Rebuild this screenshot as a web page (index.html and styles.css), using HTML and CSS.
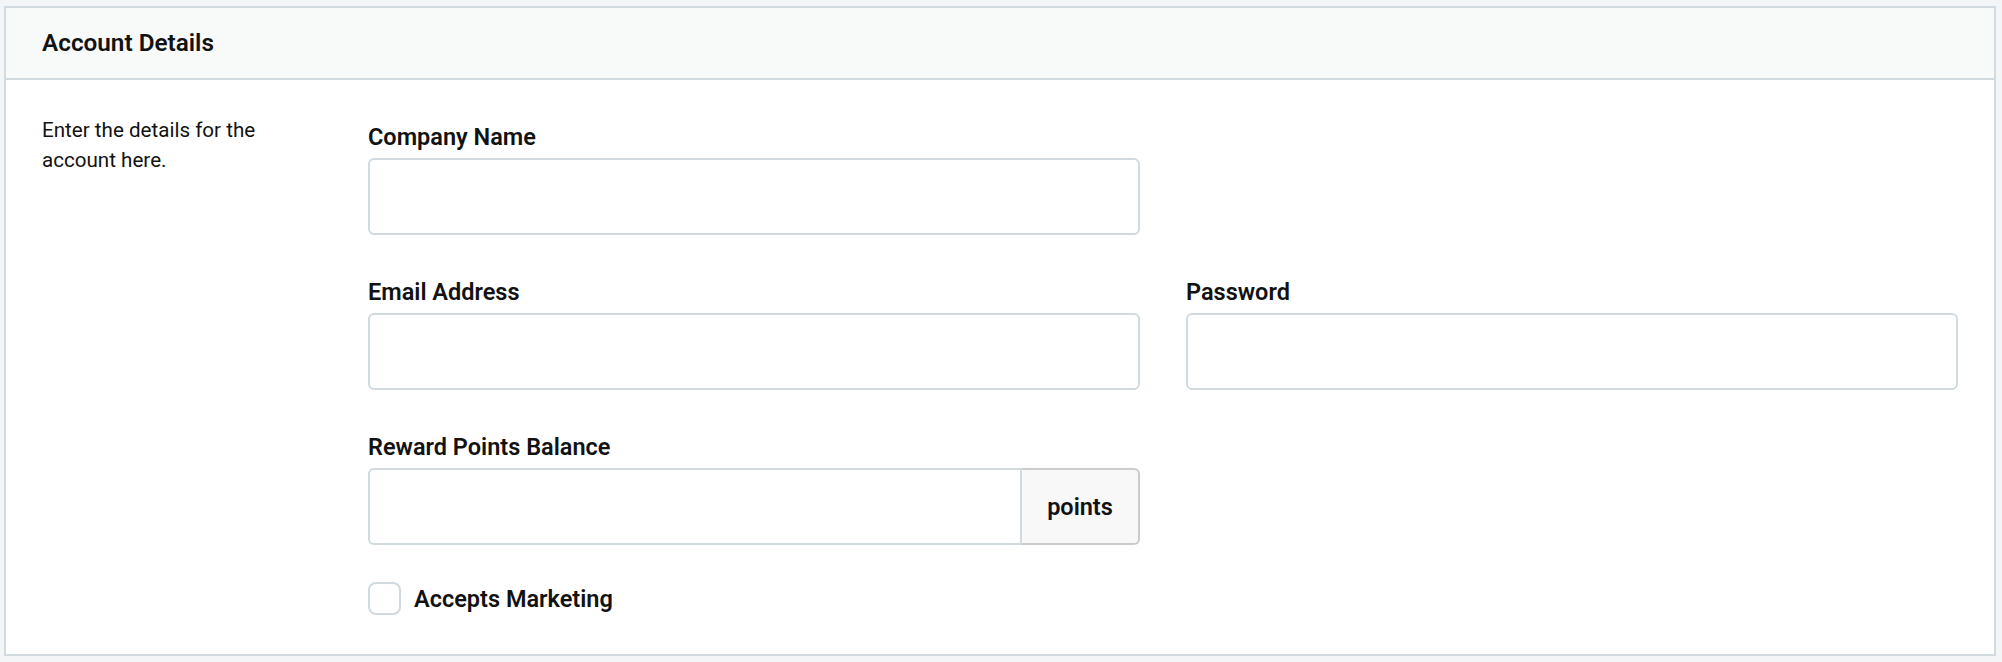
FILE: index.html
```html
<!DOCTYPE html>
<html lang="en">
<head>
<meta charset="utf-8">
<title>Account Details</title>
<link rel="stylesheet" href="styles.css">
</head>
<body>
<section class="card">
  <header class="card-header">
    <h2 class="card-title">Account Details</h2>
  </header>
  <div class="card-body">
    <p class="description">Enter the details for the account here.</p>
    <div class="form">
      <div class="field">
        <label class="label" for="company">Company Name</label>
        <input class="input" id="company" type="text">
      </div>
      <div class="spacer"></div>
      <div class="field">
        <label class="label" for="email">Email Address</label>
        <input class="input" id="email" type="email">
      </div>
      <div class="field">
        <label class="label" for="password">Password</label>
        <input class="input" id="password" type="password">
      </div>
      <div class="field">
        <label class="label" for="points">Reward Points Balance</label>
        <div class="input-group">
          <input class="input input-left" id="points" type="text">
          <span class="addon">points</span>
        </div>
      </div>
      <div class="spacer"></div>
      <label class="check">
        <span class="checkbox"></span>
        <span class="check-text">Accepts Marketing</span>
      </label>
    </div>
  </div>
</section>
</body>
</html>
```

FILE: styles.css
```css
* { box-sizing: border-box; }
html, body { margin: 0; }
body {
  background: #f3f5f7;
  padding: 6px 6px 6px 4px;
  font-family: "Roboto", "Liberation Sans", sans-serif;
  color: #121212;
}
.card {
  background: #ffffff;
  border: 2px solid #d0dadf;
  height: 650px;
}
.card-header {
  height: 72px;
  background: #f8f9f9;
  border-bottom: 2px solid #d0dadf;
  display: flex;
  align-items: center;
  padding: 0 36px 1px;
}
.card-title {
  margin: 0;
  font-size: 24.3px;
  font-weight: 600;
  line-height: 28px;
}
.card-body {
  display: flex;
  gap: 46px;
  padding: 36px 36px 36px;
}
.description {
  width: 280px;
  flex: none;
  margin: 0;
  padding-right: 18px;
  font-size: 20.6px;
  line-height: 29.5px;
}
.form {
  flex: 1;
  display: grid;
  grid-template-columns: 1fr 1fr;
  column-gap: 46px;
  row-gap: 36px;
}
.field { display: flex; flex-direction: column; }
.label {
  font-size: 23.5px;
  font-weight: 600;
  line-height: 42px;
}
.input {
  height: 77px;
  border: 2px solid #d0dadf;
  border-radius: 6px;
  background: #fff;
  width: 100%;
  font: inherit;
  outline: none;
}
.input-group { display: flex; }
.input-left {
  flex: 1;
  border-radius: 6px 0 0 6px;
}
.addon {
  width: 118px;
  flex: none;
  height: 77px;
  display: flex;
  align-items: center;
  justify-content: center;
  background: #f8f8f8;
  border: 2px solid #cbcbcb;
  border-left: none;
  border-radius: 0 6px 6px 0;
  font-size: 23.5px;
  font-weight: 600;
}
.check {
  display: flex;
  align-items: center;
  gap: 13px;
  margin-top: 1px;
}
.checkbox {
  width: 33px;
  height: 33px;
  border: 2px solid #d0dadf;
  border-radius: 8px;
  background: #fff;
}
.check-text {
  font-size: 23.5px;
  font-weight: 600;
}
```
